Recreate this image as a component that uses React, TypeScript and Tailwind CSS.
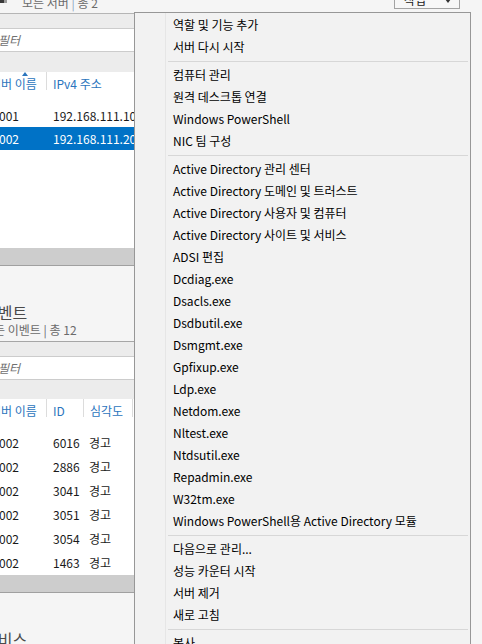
import React from 'react';

type MenuEntry = string | null;

const menuEntries: MenuEntry[] = [
    '역할 및 기능 추가',
    '서버 다시 시작',
    null,
    '컴퓨터 관리',
    '원격 데스크톱 연결',
    'Windows PowerShell',
    'NIC 팀 구성',
    null,
    'Active Directory 관리 센터',
    'Active Directory 도메인 및 트러스트',
    'Active Directory 사용자 및 컴퓨터',
    'Active Directory 사이트 및 서비스',
    'ADSI 편집',
    'Dcdiag.exe',
    'Dsacls.exe',
    'Dsdbutil.exe',
    'Dsmgmt.exe',
    'Gpfixup.exe',
    'Ldp.exe',
    'Netdom.exe',
    'Nltest.exe',
    'Ntdsutil.exe',
    'Repadmin.exe',
    'W32tm.exe',
    'Windows PowerShell용 Active Directory 모듈',
    null,
    '다음으로 관리...',
    '성능 카운터 시작',
    '서버 제거',
    '새로 고침',
    null,
    '복사',
];

const events = [
    { server: '002', id: '6016', level: '경고' },
    { server: '002', id: '2886', level: '경고' },
    { server: '002', id: '3041', level: '경고' },
    { server: '002', id: '3051', level: '경고' },
    { server: '002', id: '3054', level: '경고' },
    { server: '002', id: '1463', level: '경고' },
];

function FilterBox() {
    return (
        <div className="flex h-[24px] items-center border-y border-[#cccccc] bg-white">
            <span className="-ml-[2px] italic text-[#707070]">필터</span>
        </div>
    );
}

function HeaderCell({ children, width, sep = true }: { children: React.ReactNode; width: string; sep?: boolean }) {
    return (
        <div className={`relative flex h-full shrink-0 items-center ${width}`}>
            {children}
            {sep && <span className="absolute right-0 top-0 h-[18px] w-px bg-[#dcdcdc]" />}
        </div>
    );
}

function SectionTitle({ title, sub }: { title: string; sub: string }) {
    return (
        <div className="border-b border-[#a6a6a6] bg-[#f5f5f5] pb-[3px] pt-[36px] pl-0">
            <div className="-ml-[17px] whitespace-nowrap">
                <div className="h-[20px] text-[16px] leading-[20px] text-[#4a4a4a]">{title}</div>
                <div className="h-[16px] leading-[16px] text-[#6b6b6b]">{sub}</div>
            </div>
        </div>
    );
}

function LeftPanel() {
    return (
        <div className="w-[134px] shrink-0 overflow-hidden whitespace-nowrap">
            {/* servers */}
            <div className="h-[14px] border-b border-[#b5b5b5] bg-[#f5f5f5]">
                <div className="flex h-[14px] items-start">
                    <span className="flex h-[3px] w-[7px]">
                        <span className="w-[4px] bg-[#3a3a3a]" />
                        <span className="w-[3px] bg-[#9c9c9c]" />
                    </span>
                    <span className="-mt-[5px] ml-[15px] text-[#6b6b6b]">
                        모든 서버 <span className="text-[#8aa3bf]">|</span> 총 2
                    </span>
                </div>
            </div>
            <div className="h-[14px] bg-[#ececec]" />
            <FilterBox />
            <div className="h-[20px] bg-[#ececec]" />
            <div className="h-[176px] bg-white">
                <div className="flex h-[24px] text-[#2b75bd]">
                    <HeaderCell width="w-[47px]">
                        <span className="-ml-[10px]">서버 이름</span>
                        <span className="absolute left-[22px] top-0 h-0 w-0 border-x-[3px] border-b-[4px] border-x-transparent border-b-[#2b75bd]" />
                    </HeaderCell>
                    <HeaderCell width="w-[87px] pl-[6px]" sep={false}>
                        IPv4 주소
                    </HeaderCell>
                </div>
                <div className="h-[8px]" />
                <div className="flex h-[23px] items-center text-[#1a1a1a]">
                    <span className="w-[47px] shrink-0 -ml-[1px]">001</span>
                    <span className="pl-[7px]">192.168.111.10</span>
                </div>
                <div className="flex h-[23px] items-center bg-[#0072c6] text-white">
                    <span className="w-[47px] shrink-0 -ml-[1px]">002</span>
                    <span className="pl-[7px]">192.168.111.20</span>
                </div>
            </div>
            <div className="h-[18px] border-b border-[#a0a0a0] bg-[#cdcdcd]" />

            {/* events */}
            <SectionTitle title="이벤트" sub="모든 이벤트 | 총 12" />
            <div className="h-[14px] bg-[#ececec]" />
            <FilterBox />
            <div className="h-[19px] bg-[#ececec]" />
            <div className="bg-white">
                <div className="flex h-[24px] text-[#2b75bd]">
                    <HeaderCell width="w-[47px]">
                        <span className="-ml-[10px]">서버 이름</span>
                    </HeaderCell>
                    <HeaderCell width="w-[37px] pl-[6px]">ID</HeaderCell>
                    <HeaderCell width="w-[49px] pl-[6px]">심각도</HeaderCell>
                </div>
                <div className="h-[8px]" />
                {events.map(e => (
                    <div key={e.id} className="flex h-[24px] items-center text-[#1a1a1a]">
                        <span className="w-[47px] shrink-0 -ml-[1px]">{e.server}</span>
                        <span className="w-[37px] shrink-0 pl-[7px]">{e.id}</span>
                        <span className="pl-[6px]">{e.level}</span>
                    </div>
                ))}
            </div>
            <div className="h-[18px] border-b border-[#a0a0a0] bg-[#cdcdcd]" />

            {/* services */}
            <SectionTitle title="서비스" sub="모든 서비스 | 총 0" />
        </div>
    );
}

function ContextMenu() {
    return (
        <div className="absolute left-[134px] top-[12px] w-[337px] border border-[#979797] bg-[#f2f2f2] pt-[1px] text-black">
            <span className="absolute bottom-0 left-[30px] top-0 w-px bg-[#e6e6e6]" />
            {menuEntries.map((entry, i) =>
                entry === null ? (
                    <div key={i} className="flex h-[6px] items-center pl-[33px] pr-[2px]">
                        <div className="h-px w-full bg-[#d7d7d7]" />
                    </div>
                ) : (
                    <div key={i} className="relative flex h-[22px] items-center whitespace-nowrap pl-[38px]">
                        {entry}
                    </div>
                )
            )}
        </div>
    );
}

export default function App() {
    return (
        <div className="relative h-[644px] w-[482px] overflow-hidden bg-[#f5f5f5] font-['Segoe_UI','Noto_Sans_CJK_KR',sans-serif] text-[12px] leading-[16px]">
            <div className="flex">
                <LeftPanel />
                <div className="flex flex-1 justify-end">
                    <div className="mr-[22px] -mt-[13px] flex h-[22px] w-[66px] items-end justify-between border border-[#a3a3a3] bg-[#f7f7f7] pl-[9px] pr-[8px]">
                        <span className="text-[#222]">작업</span>
                        <span className="mb-[5px] h-0 w-0 border-x-[3px] border-t-[4px] border-x-transparent border-t-[#333]" />
                    </div>
                </div>
            </div>
            <ContextMenu />
        </div>
    );
}
